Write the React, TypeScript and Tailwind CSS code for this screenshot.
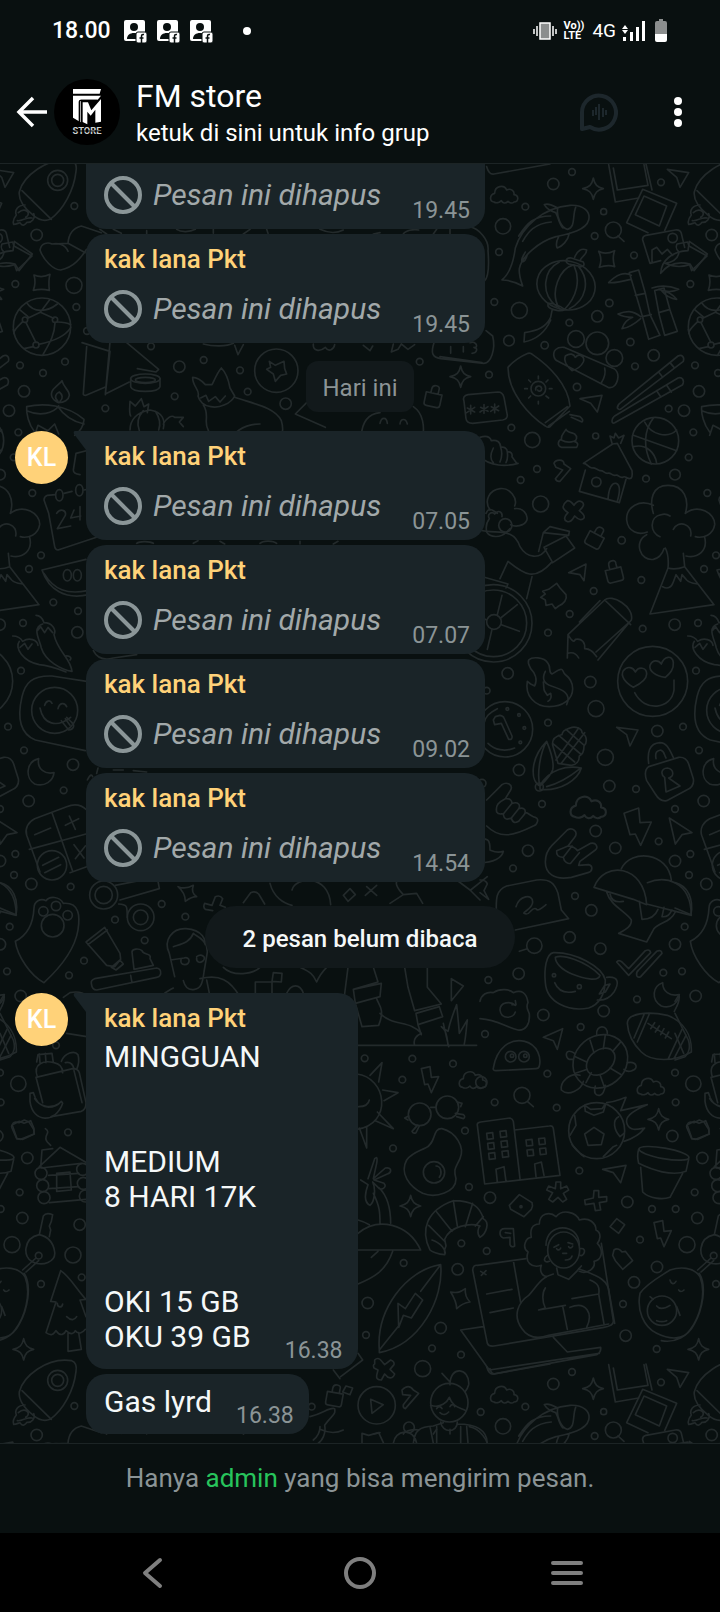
// App.tsx
import React from 'react';

type Dot = [number, number, number];

interface Message {
  id: number;
  time: string;
  sender?: string;
  text?: string;
  deleted?: boolean;
  avatar?: boolean;
  clipped?: boolean;
}

const SENDER = 'kak lana Pkt';

const yesterday: Message[] = [
  { id: 1, time: '19.45', deleted: true, clipped: true },
  { id: 2, time: '19.45', deleted: true, sender: SENDER },
];

const today: Message[] = [
  { id: 3, time: '07.05', deleted: true, sender: SENDER, avatar: true },
  { id: 4, time: '07.07', deleted: true, sender: SENDER },
  { id: 5, time: '09.02', deleted: true, sender: SENDER },
  { id: 6, time: '14.54', deleted: true, sender: SENDER },
];

const unread: Message[] = [
  {
    id: 7,
    time: '16.38',
    sender: SENDER,
    avatar: true,
    text: 'MINGGUAN\n\n\nMEDIUM\n8 HARI 17K\n\n\nOKI 15 GB\nOKU 39 GB',
  },
  { id: 8, time: '16.38', text: 'Gas lyrd' },
];

// Circles scattered between the wallpaper doodles, one list per region
const dotsTopLeft: Dot[] = [
  [223, 138, 10], [110, 225, 17], [46, 372, 10], [222, 376, 24], [229, 441, 10], [60, 616, 10],
  [129, 639, 10], [195, 605, 10], [453, 559, 10], [538, 620, 17], [611, 600, 10], [720, 631, 10],
  [743, 695, 10], [524, 709, 10], [72, 694, 17], [27, 752, 17], [316, 745, 10], [857, 731, 17],
  [1259, 605, 10], [261, 513, 10],
];
const dotsTopRight: Dot[] = [
  [276, 36, 10], [220, 72, 17], [543, 67, 10], [136, 140, 10], [371, 155, 9], [69, 199, 23],
  [344, 228, 10], [57, 276, 10], [462, 286, 10], [43, 426, 10], [388, 429, 11], [118, 451, 24],
  [352, 469, 17], [268, 488, 10], [87, 542, 16], [194, 556, 11], [451, 546, 11], [521, 586, 17],
  [465, 619, 10], [291, 681, 11], [27, 644, 10], [566, 746, 10], [347, 828, 9], [94, 803, 10],
  [157, 840, 23], [171, 927, 10], [122, 960, 10], [498, 956, 10], [585, 944, 16], [626, 892, 10],
  [425, 1141, 11], [484, 1260, 10], [341, 1293, 10], [269, 1362, 10], [204, 1418, 10],
  [488, 1406, 10], [584, 1394, 17],
];
const dotsMidLeft: Dot[] = [
  [55, 97, 10], [97, 279, 10], [123, 466, 10], [87, 507, 10], [160, 607, 10], [234, 633, 10],
  [69, 669, 10], [232, 697, 17], [63, 812, 10], [24, 980, 10], [72, 1051, 10], [219, 1094, 17],
  [86, 1203, 17], [191, 1171, 10], [46, 1362, 10], [42, 1425, 10], [94, 1452, 17], [212, 1460, 10],
];
const dotsMidRight: Dot[] = [
  [83, 100, 17], [331, 126, 17], [348, 206, 24], [204, 248, 10], [117, 390, 17], [376, 352, 24],
  [532, 273, 17], [388, 438, 17], [186, 492, 10], [468, 447, 10], [347, 573, 17], [144, 632, 17],
  [536, 604, 10], [585, 507, 10], [406, 624, 17], [99, 685, 10], [585, 663, 17], [285, 768, 10],
  [334, 811, 17], [269, 892, 17], [361, 926, 17], [585, 913, 17], [550, 998, 10], [116, 1001, 17],
  [25, 1020, 10], [471, 1078, 10], [371, 1113, 17], [190, 1125, 17], [15, 1182, 10],
  [302, 1161, 10], [202, 1301, 10], [585, 1298, 10], [587, 1387, 10], [44, 1387, 10],
  [230, 1403, 10], [577, 1488, 17], [20, 152, 10], [6, 430, 12], [4, 1327, 17],
];
const dotsLowLeft: Dot[] = [
  [29, 140, 10], [345, 119, 10], [434, 181, 10], [252, 242, 10], [207, 286, 10], [21, 274, 10],
  [168, 496, 10], [55, 611, 23], [204, 757, 10], [82, 834, 17], [59, 937, 10], [67, 1014, 17],
  [36, 1094, 24], [239, 1034, 17], [219, 1125, 24], [123, 1212, 10], [245, 1192, 10],
  [485, 72, 10], [556, 110, 10], [1094, 535, 10], [1237, 536, 10], [1359, 551, 10],
  [62, 348, 17],
];
const dotsLowRight: Dot[] = [
  [187, 59, 10], [375, 212, 10], [159, 265, 10], [387, 381, 10], [450, 413, 17], [718, 332, 10],
  [862, 426, 17], [936, 447, 10], [1007, 447, 10], [440, 573, 10], [364, 550, 10], [191, 609, 10],
  [353, 628, 17], [83, 729, 17], [302, 804, 17], [900, 539, 10], [951, 621, 17], [882, 667, 17],
  [849, 732, 10], [857, 827, 17], [950, 867, 10], [78, 825, 10], [276, 865, 10], [363, 884, 10],
  [248, 926, 24], [422, 1056, 10], [-85, 1040, 10],
];

const Dots: React.FC<{ dots: Dot[] }> = ({ dots }) => (
  <>
    {dots.map(([cx, cy, r]) => (
      <circle key={`${cx}-${cy}`} cx={cx} cy={cy} r={r} />
    ))}
  </>
);

const Cloud: React.FC<{ at: string }> = ({ at }) => (
  <path transform={at} d="M-30 22c-14-2-14-22 2-26 0-22 28-28 36-10 12-6 24 2 22 14 16 2 14 22 0 22-6 6-14 2-18-2-8 8-16 6-20-2-6 6-16 8-22 4z" />
);

const Sparkle: React.FC<{ at: string }> = ({ at }) => (
  <path transform={at} d="M0-32c4 20 12 28 30 32-18 4-26 12-30 32-4-20-12-28-32-32 20-4 28-12 32-32z" />
);

const Lock: React.FC<{ at: string }> = ({ at }) => (
  <path transform={at} d="M-24-12h48v32q0 8-8 8h-32q-8 0-8-8zM-10-12v-12q0-12 12-12t10 12v12" />
);

const Bolt: React.FC<{ at: string }> = ({ at }) => (
  <path transform={at} d="M-24-34 2-40 6-8 28-10 6 38-4 12-14 14z" />
);

const WallpaperArt = () => (
  <g id="wallpaper-art">
    <g transform="translate(0 -12)">
      <Dots dots={dotsTopLeft} />
      <path d="M58 95C70 50 140-10 215 2c14 5 15 20 13 32C222 90 190 150 150 178c-20 8-38-2-50-12-20-16-46-42-42-71zM66 92l88 86M75 135c-22 0-32 16-26 30-8 10-12 18-8 28 12 0 14-6 20-4 6 12 16 4 20-2 14 2 26-12 20-26M55 158c20-18 42 2 22 14M52 182c16 2 26-12 44-8" />
      <circle cx="173" cy="61" r="30" />
      <circle cx="173" cy="61" r="18" />
      <path d="M-30 310c28-4 40-18 42-34-10-8-10-14-6-24l32-6 4 12 54 30-46 44-6-18c-20 6-40 10-74-4M120 270c4-22 24-24 36-18l48-2c2-30 16-46 40-52l60 20M120 270c10 30 40 60 62 60 40-8 60-36 78-62M156 252c16-4 40 0 48 22M204 250l52 28" />
      <path d="M102 345c14 6 32 6 48-2-4 14-4 30-2 48-16-4-32-4-48 0 6-16 6-32 2-46z" />
      <circle cx="126" cy="500" r="86" />
      <circle cx="75" cy="479" r="8" />
      <circle cx="165" cy="479" r="8" />
      <circle cx="108" cy="555" r="9" />
      <path d="M80 428c20 30 60 30 92 4M83 475l38-18 28-38M121 457l40 18M68 485c-20 20-28 28-26 36M78 488l30 60M116 553c50-10 80-24 96-50M172 486c20 0 30 2 40 8M165 488c-2 40-16 60-36 96M42 520l-2-12M84 470l-26-22M100 560l-28 6" />
      <path d="M246 548l84 26-14 130M260 560l-10 140q-2 6 8 6l60-26M330 546l-14 156 72-36M380 548l96 80-8 8-56-10" />
      <path d="M392 656v24q4 14 44 14t44-14v-24" />
      <ellipse cx="436" cy="656" rx="44" ry="14" />
      <ellipse cx="436" cy="660" rx="30" ry="8" />
      <path d="M176 728c-20-8-28-24-16-40 10-12 22-20 26-26 4 20 22 28 22 44-2 14-16 22-32 22zM174 724c-14-12-6-24 4-28 10 8 12 20 2 28M80 740c50-12 120-6 172 38M80 740c-2 20 6 54 24 76M80 752c40 18 80 8 96-14M174 740c20 30 44 44 78 52M252 780c-2 20-14 36-28 46M104 826l10-30 30 16 20-20 12 30" />
      <path d="M392 768c-6-12-2-30-2-44l16 14 18-22 8 24 14-8-4 26M390 810c0-30 20-54 60-60 38 6 46 30 40 56M430 752c-16 18-20 40-12 60M466 754c12 18 16 40 10 56M490 792c10-20 26-28 34-20l26 0-12 14 12 14" />
      <circle cx="829" cy="632" r="65" />
      <path d="M808 604l18 12 26-12 2 22 6 16-18 4-16 18-6-22-20-14 12-6z" />
      <path d="M594 708c8-16-18-30-16-56 14 0 24 6 38 22h20c8-16 16-36 28-50 14 14 22 38 26 60l14 24c-10 22-46 38-72 32-20-2-34-16-38-32zM602 714l16-8 8 18 20-14 14 16 16-18M610 735c20 30 0 50 14 74l20 50M704 712c60 20 120 30 140 70 6 20 6 40-4 60M690 852c0-30 40-60 90-60M920 728l-34 34 90 40M1240 740c30 20 34 60 28 94M1084 828c2-40 20-66 56-70M1140 790c4-20 20-20 22 0M1200 792c2-18 18-18 22 0" />
      <Lock at="translate(1300 712) rotate(12)" />
      <Sparkle at="translate(1382 650)" />
      <path d="M1302 548c-10 30-6 44 20 48l130 14c20-2 36-40 26-82l-20-16M1320 590l126 18M1352 560v20M1390 560v16M1410 548c14-6 28 10 14 16M1416 580c14 0 20-16 6-18" />
      <path d="M1408 200c30 6 60 40 56 72M1464 272c4 50 0 80-10 90M940 552c-2 22 20 24 36 10 10 16 26 6 28-8M1090 556l20 16 8-14M1180 552l-6 24 20-8 10-16 20 16 20-14M610 552c30 8 70 8 90-2M704 556l10 28 16-30" />
      <path d="M300 208l20 14M340 208l24 12M440 212v10M530 208c14 10 40 8 56 0M640 208v12M730 222l20-14M800 208l4 12M960 208c30 14 50 12 70 2M1120 222l20-4M1210 222c6-10 30-16 46-12M1300 222l10-14M1350 208v14" />
      <path d="M1300 838c-4 6 0 18 14 10 4 18 20 14 22 0 16 4 26-8 14-16M1392 724c-4-10 0-18 12-20l90-8q14 0 18 16l10 54q0 12-14 14l-90 10q-18 0-20-14zM1412 736v26M1402 744l22 12M1424 742l-24 16M1452 734v26M1442 742l22 12M1464 740l-24 16M1484 732v26M1474 740l22 12M1496 738l-24 16" />
    </g>

    <g transform="translate(1440 -12)">
      <Dots dots={dotsTopRight} />
      <path d="M20 20c4 14 10 24 22 22L210 12" />
      <Cloud at="translate(72 104)" />
      <Sparkle at="translate(340 86)" />
      <path d="M66 360c24-20 34-50 40-96C126 200 190 142 270 136c42-2 62 20 56 44-8 30-54 40-98 50-50 14-104 60-110 96-2 20 4 34 10 52-18-10-36-18-62-18zM193 134c14-6 28 4 40 10-4 26 10 60 30 64 24-6 14-42 24-66M193 134c8 14 20 20 34 24 10 18 10 34 22 46M212 168c-50 0-70 20-96 60M214 186c-50 4-70 30-86 58M236 230c-6 12-10 24-4 34 14-4 32-22 36-44M136 276c-6 12-14 20-10 30 8 0 14-14 16-22" />
      <path d="M386 14l20 112 70-12M400 24l12 66 92-14-12-62M498 12l18 78" />
      <path d="M488 88l102 42-36 82M488 88l-48 100 64 30M492 108l68 30-22 60-72-34z" />
      <circle cx="400" cy="210" r="24" />
      <path d="M414 228l18 16" />
      <path d="M488 240q-2-10 10-14l88-16q14-2 18 10l10 42M488 240l22 70 32-8M516 306v-36l14-8 16 20 16-14 16 18" />
      <circle cx="578" cy="234" r="14" />
      <path d="M542 340c2-40 36-66 82-68l4-28 54 38-40 50-12-20c-40-10-70 4-88 28z" />
      <path d="M562 28l64 10-26 44-10-30z" />
      <ellipse cx="258" cy="376" rx="88" ry="73" transform="rotate(12 258 376)" />
      <path d="M230 440c-50-40-40-110 8-134M238 446c-30-50 0-120 44-132M252 450c40-40 50-90 30-134M268 446c50-24 64-84 28-126M258 302q4-10 16-8l36 12q6 12-6 14l-38-8q-8-4-8-10zM284 292c8-22 22-28 36-22 0 16-16 18-20 32M204 430c14-2 40 10 50 18-10 10-44 0-50-10zM216 452l-4 20c-14 30-40 40-78 46l-2 28c40-8 66-34 80-66" />
      <path d="M356 274c14 8 32 6 48-2-6 16-6 30 0 48-16-6-30-4-46 2 6-14 6-32-2-48z" />
      <path d="M448 338l28-8 20 70 14 64 30 62-34 12-18-66-20-68zM466 406l30-6M486 470l28-6M454 346c-20-12-46-2-68 22 24 2 44-4 66-10M482 470c-24-20-44-18-68-8 14 8 30 10 44 10-16 6-26 16-32 34 20-2 40-16 56-30M524 392l28-8 18 66 22 64-38 12-16-60zM536 458l34-10M516 384c24-8 50-8 80 4-20 10-40 8-60 0 20 4 40 10 54 30-18-2-34-12-44-24" />
      <circle cx="288" cy="537" r="25" />
      <circle cx="352" cy="550" r="34" />
      <circle cx="403" cy="594" r="25" />
      <path d="M222 590c-4-18 8-30 30-28l150 64q12 8 12 24c-2 24-14 36-30 32L234 604q-10-4-12-14zM374 624c4 16-2 32-10 44M256 588c14-10 26-6 30 4 12-14 30-2 24 14-8 16-20 22-34 26-14-12-26-30-20-44z" />
      <path d="M84 622c16-18 36-32 60-42q8-2 14 4c50 34 106 90 112 154l-60 62q-8 4-14-2C150 768 84 700 84 622zM196 788l66-48M206 798l62-44M270 764l30 6q12 10 6 16l-32-14" />
      <circle cx="175" cy="686" r="22" />
      <path d="M167 690c-2-14 16-16 18-4 0 8-10 10-12 4M175 648v8M175 724v8M134 686h8M208 686h8M146 660l6 6M198 708l8 6M204 660l-6 6M146 714l6-6" />
      <path d="M412 744c0-8 4-12 10-16L594 588c12-6 20 4 16 16L424 746q-6 6-12-2zM396 782c0-8 4-10 8-14l190-114c12-4 20 6 14 20L404 788q-8 4-8-6zM536 636l12 16M570 608l12 14M530 692l12 18M560 676l14 20" />
      <path d="M300 716l66-10-14 50-20-26z" />
      <path d="M258 808c4 10 20 10 26 14 10 8 6 20-2 22 12 2 14 10 8 18h-46c-14-6-10-20 0-24-2-14 8-18 14-30zM244 840c14 8 26 8 38 4" />
      <circle cx="526" cy="842" r="70" />
      <path d="M494 786c20 40 70 50 96 24M460 826l130 46M520 774c-30 40-30 90-6 138M460 860c40-10 66 20 70 50" />
      <path d="M310 910l88-58 14-2 44 82c2 16 0 24-8 24-12-2-12-10-20-4-12 2-12-10-22-6-12 2-12-10-24-6-10 0-12-10-22-8-12-4-14-10-24-8-12-2-14-14-26-14zM396 850l-6-22 12 6 4-14 10 14 16-8-10 24M316 930l-18 64 120 34 20-70M384 1018c2-34 12-50 24-48 14 4 12 26 4 54" />
      <circle cx="349" cy="966" r="14" />
      <path d="M222 910c4-12 30-14 30 2l20 14-32 38q-10 2-14-8l22-26-20-8z" />
      <circle cx="182" cy="1032" r="24" />
      <path d="M262 1022q10 0 20 14 12-18 24-10t-8 26q18 14 14 22-10 12-28-6-12 22-24 16-14-8 4-26-18-12-14-20 2-8 12-16z" />
      <Lock at="translate(346 1134) rotate(28)" />
      <Lock at="translate(402 1238) rotate(-14)" />
      <path d="M520 1060c-12-40-4-84 44-84 50 0 64 44 52 84 40-30 90 0 88 34-4 30-34 42-58 36M520 1036c-40-20-82 4-80 44 4 36 36 46 62 36M500 1124c-40 20-20 80 20 74 18-4 26-14 32-32M540 1130c-30-10-34-60 4-66 12-4 20 0 26 4M580 1108c14-30 60-16 52 20M674 1132c10 40-20 64-56 56M556 1164c10 20 10 40 8 60l-54 138 192-28-88-114-4-40M564 1224c14 4 34 2 50-4M548 1280c14 8 26 4 32-14l8-22 14 20 4-20 14 16c10 10 20 10 34 12" />
      <path d="M0 832c20-6 30-2 34 10 16-4 28 4 28 20 10-2 20 2 20 14 10-2 16 4 14 14l14 20M40 864c-10 20-10 34 0 44M62 862c6 18 4 30-2 44M82 878c2 14 0 22-4 30M0 890c30 30 80 30 114 20" />
      <path d="M30 1050c-20-30 0-60 30-64 30-4 54 30 44 52M104 1046c24-4 42 18 36 36-8 16-34 20-48 12M18 1060c10-24 26-4 34 0M20 1116c-4-20 0-30 8-40-8-14 8-24 16-14 10-14 24-6 22 8M20 1116c10 16 40 20 60 0l10-10" />
      <circle cx="76" cy="1096" r="20" />
      <path d="M0 1110c50 14 100-10 120 50 20 34 60 40 80 6M192 1162l66-34 26 36-66 44zM176 1174l14-56 20-18 58 14-2 12-76-8M60 1256l24-52c50 40 80 60 130 4M156 1250l-16 66" />
      <path d="M266 1238l52-26-6 50-12-18zM206 1288l24-18 10 14 18 20c4 14-6 28-22 34l-10 8-10-14-18 4-2-16-14-8 14-10-8-8z" />
      <circle cx="40" cy="1390" r="100" />
      <circle cx="40" cy="1390" r="116" />
      <circle cx="42" cy="1386" r="22" />
      <path d="M52 1364l14-58M62 1374l50-40M64 1394l54 20M36 1408l-14 60M20 1380l-20-10M0 1248l84 24-6 12" />
      <path d="M262 1494l2-70 110-104c20-20 90 20 80 60l-100 120M374 1320l78 74M298 1386l62-64M264 1424c12 20 18 24 22 14 20-4 30 10 28 28 20 0 28 14 36 24M348 1476l96-86M262 1480c20-6 30 6 34 14" />
    </g>

    <g transform="translate(0 708)">
      <Dots dots={dotsMidLeft} />
      <path d="M220 210l8-50 40-10M220 210q0 12 20 14M132 300q0-10 10-14l24-2M132 300l14 40 18 100q2 10 10 10l120-40M192 280l24-6M252 270l20-4M170 340c10-16 30-10 26 6l-24 40 40-8M222 330l-10 24 30-6M240 320v40" />
      <ellipse cx="178" cy="286" rx="11" ry="17" />
      <ellipse cx="238" cy="271" rx="11" ry="17" />
      <path d="M258 478l-132 32c20 60 70 90 140 74M132 520c30 50 70 64 130 52" />
      <ellipse cx="202" cy="526" rx="12" ry="17" />
      <ellipse cx="232" cy="526" rx="12" ry="17" />
      <path d="M108 646c14 0 20 10 24 22 24 0 38 20 30 36 10 50 50 70 54 110-30-4-80-30-92-70-4-24-30-60 4-72M38 708c14 0 24 6 30 16 20-14 44-4 46 12M58 724c-14 20 10 60 60 70 30 2 50 10 80 22M114 690l8-10 12 18 10-16 14 16M60 742l14-12 10 18 12-16M196 768c16-2 20 8 14 12" />
      <path d="M260 844l-104-16c-60-2-80 20-90 62-14 60-10 110 40 130l150 32" />
      <circle cx="164" cy="931" r="69" />
      <path d="M134 916c4-14 16-18 22-6M174 926c4-18 20-20 26-6M120 924c10 50 50 60 92 28M184 962l22 28c16-2 20-14 8-24l-14-14M196 956l14 20" />
      <path d="M116 1076c-40 10-40 60-12 76 30 10 56-10 58-34-26 6-52-10-46-42z" />
      <path d="M260 1230c-20-20-40-18-60-10l-96 36c-20 10-30 30-24 50l40 110M260 1400l-50 18M156 1238l62 176M88 1348l170-46M104 1304l48-20M196 1276l40-20M208 1248l18 40M222 1334l30 40M256 1338l-30 38" />
      <circle cx="156" cy="1396" r="44" />
      <path d="M128 1396l48-24M134 1418l48-24" />
      <path d="M280 752c10 20 30 30 60 22l70-10M262 1140c10-20 14-16 16-10M290 1120l4-16M340 1110h30M400 1112l40 4M410 430c10-8 40-6 50 0M580 430l14-8M660 424l14 8M780 430c10-10 40-8 50 0M900 424v8M1000 432l14-8" />
    </g>

    <g transform="translate(1440 1428)">
      <Dots dots={dotsMidRight} />
      <path d="M146 60c10-10 46-10 58 10 10 14 0 26 12 32 10-4 14-12 26-14 8-2 6 8 12 14 16 12 24 28 24 44 0 32-30 54-70 54-44 0-74-34-66-76l10 8 12 6c10-20 0-40-12-52-4-10-10-16-6-26zM196 94c-10 20-6 34 12 42 30 10 70 20 52 58M190 126c2 14 0 20 4 28l8 12 10-6c4 14 0 20-8 24" />
      <circle cx="518" cy="124" r="105" />
      <path d="M460 142c-24-14-40-34-30-50 12-16 30-10 36 4 10-18 34-14 34 6 0 18-20 30-40 40zM556 112c-30-4-50-20-46-36 8-18 26-16 34-4 8-24 34-28 36-4 2 20-10 32-24 44zM464 158c30 60 110 50 118-8V120" />
      <circle cx="75" cy="268" r="83" />
      <path d="M40 240l6-10 14-4q10 2 12 8l24 54q2 12-10 10L64 250l-20 4zM24 310c20 20 50 26 80 14M12 250c4-20 14-30 40-44" />
      <circle cx="82" cy="207" r="4" />
      <circle cx="117" cy="225" r="4" />
      <circle cx="133" cy="264" r="4" />
      <circle cx="121" cy="307" r="4" />
      <path d="M410 262l64 8-24 48-10-34z" />
      <path d="M200 304c-50 50-50 120-20 134M200 304c10 24 24 60 18 86-10 24-30 40-38 48-10-34 0-100 20-134zM180 436c30-50 80-60 124-52-10 34-60 70-124 64zM200 440c40-10 70-30 100-54" />
      <circle cx="178" cy="441" r="12" />
      <path d="M218 316c-4-26 20-30 28-32 2-16 16-16 24-20 14-6 36 0 36 14 16 10 16 30 6 40 0 16-4 26-14 30 0 14-8 26-24 28l-40-6-16-54M218 310l66 56M236 286l66 56M258 268l52 46M228 360l68-96M244 370l70-92" />
      <path d="M506 370c-4-30 0-60 34-62 20 0 28 20 40 44M528 356c-4-20 4-24 14-26 12 4 10 14 16 24M506 380l90-28q22-2 30 20l14 44q4 24-20 34l-60 32q-20 4-34-20l-26-40q-10-30 6-42zM566 414c16-4 18-26-4-30-20 2-20 20-8 28l4 44 42-18z" />
      <path d="M20 480l46-46c14-10 34 0 26 16l-16 26M76 476c-20 10-30 20-26 40 6 10 14 4 20 6 2 20 14 16 24 12 4 18 14 14 22 10 6-10 16-16 20-26 10 0 20 14 30 14 14 4 4 24-6 26-60 30-100 40-140 0M76 476c16-2 20 8 20 14 20-6 26 6 20 16 12-4 24 0 18 16M96 490l-26 32M116 506l-22 28" />
      <Cloud at="translate(324 502) scale(1.3)" />
      <path d="M196 666c0-20 4-34 20-50l46-46c16-10 34 6 22 22l-20 26c10 0 24 6 28 14l40-22c16-4 24 12 14 20l-46 34-4 12 30-2c14 4 12 20-2 24l-50 14c-54 10-78-14-78-46zM264 618l-34 14c-2 14 6 20 20 20 2 14 14 20 22 18l26-32M250 652l26-34" />
      <path d="M432 520l44-16 4 44 34-2-32 70-16-34-16 2zM568 534l68 44-30 6-20 28z" />
      <path d="M0 596c26 0 30 4 30 34 10 4 20 10 40 4-4 20-30 34-70 34" />
      <path d="M424 686c30-60 140-50 150 34M342 742c30-80 150-70 158 52l-40-16zM502 728c50-20 130-10 132 98l-134-34M380 756c10 40 60 60 74 84 2 20-20 30-38 40l84 26 22-40c20-20 50-20 64-50M390 762c4 20 20 26 40 22M478 784l8 54c24 0 40-10 48-30M552 802l-6 28c20 2 24-10 30-20" />
      <path d="M50 830c-4-60 0-80 30-92l90-18c40-4 54 10 64 40l10 50 22 26-160 34M108 800c10-34 50-40 50-14 0 20-30 30-26 34 20 10 20-20 36-14 4 10 20-4 30-12" />
      <circle cx="163" cy="917" r="23" />
      <path d="M118 934l24-8M0 720c10 0 20 4 22 12l-10 20 14 26-26-20" />
      <path d="M220 938c-22 4-28 50-24 90 4 60 70 88 130 76 30-10 50-40 50-84-10-40-90-84-156-82zM226 952c20-10 90 10 134 54-4 20-50 10-84-4-34-14-50-34-50-50zM380 1012c40-4 36 20 22 44-14 20-30 26-50 24M374 1036l16-4-14 24-18 6zM224 1028c10 24 30 34 62 26" />
      <circle cx="222" cy="1006" r="5" />
      <circle cx="298" cy="1040" r="6" />
      <path d="M410 966q6-8 16 0l20 20 50-54q14-6 16 6l-66 68zM470 1006q-2-10 6-16l54-56q14-6 16 6l-64 70q-10 4-12-4z" />
      <path d="M548 1028c-30 10-36 50-4 70 30 10 50-10 54-34-30 6-50-10-50-36z" />
      <path d="M0 1084c4-20 20-30 40-26 20-14 50-10 60 0 24-10 40 0 44 30-8 14 0 20 4 34 2 30-10 50-34 48-40-10-60-30-114-34M106 1096c-14-14-46-10-46 14 4 30 40 26 46 6M96 1094l12 0-2-12" />
      <path d="M190 1192l58-26-16 62-12-26zM40 1284c10-60 50-90 94-80 40 10 50 50 44 74q-2 8-10 8l-120 6q-10 0-8-8z" />
      <circle cx="92" cy="1250" r="16" />
      <circle cx="132" cy="1250" r="16" />
      <circle cx="96" cy="1247" r="5" />
      <circle cx="136" cy="1247" r="5" />
      <path d="M442 1150c0-30 60-38 120-24 50 20 74 60 72 110-50 30-120 30-150 0-20-20-40-50-42-86zM492 1124l-30 70M508 1122l-36 84M606 1168l-42 90M618 1186l-36 70M504 1150l70 46M512 1166l12-18M526 1176l12-18M542 1184l10-18M556 1194l10-18" />
      <ellipse cx="361" cy="1264" rx="86" ry="76" transform="rotate(-40 361 1264)" />
      <ellipse cx="362" cy="1265" rx="48" ry="34" transform="rotate(-40 362 1265)" />
      <path d="M330 1200l12 38M376 1184l-6 42M422 1206l-24 28M286 1250l34 16M286 1300l36-12M318 1328l16-30M372 1338l-12-34M424 1304l-34-20M350 1184c-4-30 34-32 32-2M284 1240c-30-20-30 14-16 18l12 0M442 1268c30-6 34 20 14 24-10 4-20 0-24-4M300 1306c-30-10-60 20-56 44 20 20 60 0 66-26M346 1338c-6 20 0 30 14 28 10-4 14-16 16-30" />
      <Cloud at="translate(512 1340)" />
      <circle cx="126" cy="1366" r="24" />
      <path d="M142 1384l18 16" />
      <Sparkle at="translate(536 1438)" />
    </g>

    <g transform="translate(0 2148)">
      <Dots dots={dotsLowLeft} />
      <path d="M0 8c40 10 56 50 48 96L0 84" />
      <path d="M46 184c40-20 54-60 56-100 0-20 20-30 36-22 10-14 40-14 52 8 50-4 50 40 44 80-10 60-50 110-102 158-40-20-80-80-86-124z" />
      <circle cx="130" cy="94" r="14" />
      <circle cx="168" cy="78" r="14" />
      <circle cx="203" cy="106" r="14" />
      <circle cx="158" cy="137" r="34" />
      <circle cx="311" cy="45" r="26" />
      <circle cx="311" cy="45" r="42" />
      <path d="M346 16l120-24M360 60l118-34-6-34M356 72c30 2 24 10 26 40" />
      <circle cx="422" cy="112" r="22" />
      <circle cx="422" cy="112" r="40" />
      <path d="M258 186l56-44 46 78 2 18-18 22-24-4zM264 194l58-44M334 262l26-22 10 12-22 18zM274 310q-2-10 10-14l186-32q14 2 12 18-4 10-12 10l-180 38q-14 0-16-20zM396 216c0-10 20-12 30-4 4 14 30 6 24 24l10 20-58 12zM392 286l4 22" />
      <path d="M524 290l-16-70c-20-40 10-76 50-74 50 4 60 30 64 70l-10 60c-4 34-10 50-28 52-20 4-30-10-34-26M520 200c30-10 50-14 60-40 10 10 30 14 36 34M512 240l40-6c20-6 20 20 2 20-10 0-14-8-10-18M590 230c14-10 30 0 20 12-10 10-22 4-20-8M620 300l10 50M600 296c60-14 90 4 120 54M480 350c14-10 26-20 40-26" />
      <path d="M534 20c14 6 28 6 46-4-6 16-2 26 10 34-16 0-26 8-34 14 0-18-8-32-22-44z" />
      <path d="M614 70l22 6 10-26q14-6 22 6l-8 20 16 6M614 70q-6 12 2 18l22 4M730 68l22-30q14-6 24 4l18 30M1030 46l20-20 16 18-22 20zM810 10c10 40 40 60 66 66M876 30c10-40 110-50 116 44M1100 20l30 26M1130 16l-34 30M1170 70l40-26c-20-20-30-40-10-50M1210 44l40-4 18 30M1370 0l40 30 30 30M1412 30l50-40" />
      <path d="M670 262c30 30 90 20 110 0M900 262c30 14 40 20 50 44 10-24 20-34 30-44M766 340v-34h50v34M816 304l4-26 26 2-2 26zM860 340c14-30 40-30 50 0M1044 262l-14 110M1120 262l14 44-74 22M1060 328l84-18-4 40-74 20zM1066 370l20 70 50-4c20-50 0-60-6-80M1140 400c40 40 90 20 124 60-20 10-24 24-20 36M1214 262l10 60 20 70 80-20-42-50v-60M1248 400l70-20 10 30-74 24zM1254 434l10 30M1330 430l16 70M1344 496c-4-40-10-50-20-56l20 14c4-20 10-40 26-80 4 40 6 60 8 86l24-40c-4 30-4 50-10 76M1070 496h360" />
      <path d="M1354 296l36 22-36 44zM200 460l60 10M0 364l12-20c4 24-10 40-14 50M0 400l40 80q10 30-10 50l-30 10M0 460l26 60" />
      <path d="M190 352l20-14c20-4 40 0 50 10" />
      <path d="M110 546l4-22 42-4 4 28M118 522l2 26M136 520l2 28M112 590c-14-40 20-50 50-42 20 4 26 14 26 30M108 592l110-26q16 0 20 12l20 90q0 20-14 26l-90 16M108 592l20 76M184 544c10-26 40-34 50-20 4 14 2 30-4 44M196 548c20-4 24 10 26 18M222 572l24 96" />
      <path d="M90 640l10-2 6 16c20 40 60 30 78 10l4 6c-20 60-90 60-98-6zM104 656c16 26 50 30 74 14" />
      <path d="M36 744q-4-10 6-12l16-8 14 6 20-8 10 24 0 16-40 16-12-2zM136 746c20 14-10 20 6 40l10 10" />
      <path d="M122 862l4-52 32-4M118 860l62-58 80 46M124 864l120-14M146 886l90-6M146 926l90-6M148 968l110-10M170 880l40-4 4 54-44 4z" />
      <circle cx="123" cy="880" r="18" />
      <circle cx="128" cy="917" r="18" />
      <circle cx="132" cy="953" r="18" />
      <circle cx="248" cy="868" r="18" />
      <circle cx="250" cy="910" r="18" />
      <circle cx="256" cy="948" r="18" />
      <path d="M118 1064l12-56q8-12 28-4l-4 20-6 14 4 12-4 20M118 1064c-50 10-50 70-20 82 30 14 70 0 66-30-4-30-20-46-46-52M108 1134l-40 36M116 1142l-38 34" />
      <circle cx="116" cy="1127" r="10" />
      <path d="M182 1172c30 20 50 60 76 86l-18 2 18 50M182 1172l-30 92 16 2-30 92c20 14 24 0 30-6 14 20 26 10 30 0 14 14 24 10 28 0 10 14 24 4 30-4M204 1360v54l40-6-8-50M172 1270c0 14 14 14 16 2M200 1310c14 14 24 10 30 0" />
    </g>

    <g transform="translate(1020 2688)">
      <Dots dots={dotsLowRight} />
      <path d="M50 42c90 10 110 150 0 166M90 46l36-38-10 58M128 90l46 8-42 24M112 156l48 50-54-24M58 204l22 60v-62M56 140c20 0 30-10 32-20" />
      <Bolt at="translate(268 60)" />
      <Cloud at="translate(398 60)" />
      <circle cx="239" cy="163" r="34" />
      <circle cx="322" cy="142" r="34" />
      <path d="M272 142l16 0M206 168l-12 6 10 6M232 196l-16 18q4 8 12 4l10-20M352 126l14 4-4 10M346 160l24 4q8 6 0 12l-20-6" />
      <path d="M256 264c34-14 20-60 50-58 40 10 70 54 54 90-14 30-20 30-12 60 0 40-60 60-100 44-40-20-70-60-48-100 14-20 36-26 56-36z" />
      <circle cx="282" cy="337" r="32" />
      <path d="M288 318c14 0 20 20 10 34" />
      <path d="M412 196q-2-8 10-10l88-12q8 2 10 10l20 172M412 196l22 176 226-26-20-140q-2-10-12-8l-104 12M472 366l-4-38 24-8 6 44M588 350l-4-38 20-6 8 40M440 220l18-2 2 18-18 2zM480 214l18-2 2 18-18 2zM443 250l18-2 2 18-18 2zM483 244l18-2 2 18-18 2zM446 280l18-2 2 18-18 2zM486 274l18-2 2 18-18 2zM558 240l18-2 2 18-18 2zM596 236l18-2 2 18-18 2zM561 270l18-2 2 18-18 2zM599 266l18-2 2 18-18 2z" />
      <circle cx="770" cy="212" r="84" />
      <path d="M762 202l30 20-8 32-40 2-10-34zM734 136l18 12 34-2 10-14M734 136l2 18 26 12 28-10 6-20M704 166l4 30-18 30M836 170c-20 10-14 40 4 60l12-10M696 254l26 28 10 8M790 290l30-30 10-4M800 128c24-2 34-8 58-16l-16 40 80-18c-50 20-70 40-60 60 10 20 30 14 52 10-10 14-30 30-62 40" />
      <path d="M1042 196q0-8 10-10l10 2 16-8 14 6 14 22 2 14-34 16-18-2z" />
      <path d="M788 328l70-12-16 52-22-30z" />
      <path d="M896 268c-6 20-2 34 0 42 40 20 100 40 142 24l8-36M902 322l6 74c20 20 60 24 82 16l38-72" />
      <ellipse cx="972" cy="280" rx="76" ry="16" transform="rotate(10 972 280)" />
      <path d="M648 366h14l0 20 18-8 6 12-16 10 10 18-12 8-14-14-16 14-12-8 12-20-18-8 6-12 20 8z" />
      <path d="M762 392h14v20l24-2v14l-22 4 4 22-16 2-4-22-26 4-2-14 26-6z" />
      <path d="M508 436l30-32 38 24q4 10-2 20l-22 22-40-22z" />
      <circle cx="543" cy="440" r="3" />
      <path d="M84 356l20-60q10-10 6 14l-10 46 36-32c20-4 20 14 6 18l-40 18 30 10c10 10-4 20-14 16l-20-20c10 20 6 60-8 70-20-10-14-40-6-62l-22-14M100 400c20 40 20 60 20 90M118 384c24 24 34 60 34 106M54 520c60-50 150-30 188 50H54M54 480c14 4 24 8 34 14M158 574c-20 60-60 80-104 98M94 592l20-18" />
      <Sparkle at="translate(212 438)" />
      <path d="M270 570c-30-60-10-120 70-148 60 0 80 20 90 54 20 10 10 44-10 56-10-10-6-30 0-34-30-10-90 0-106 40l4 20c-10 20 0 20-4 26-20 0-40-10-44-14zM340 422l12 76M290 456l46 58M398 430l-22 70M266 496l50 50M430 470l-24 28M276 540c30 10 40 30 40 40" />
      <path d="M480 520q0-14 14-14l26 0 4 52q-10 6-14-4l0-22-20 2q-10-4-10-14zM496 518l16 2" />
      <Bolt at="translate(966 522)" />
      <path d="M830 476l24 18-18 26-26-20zM822 570c10-8 20 0 24 6l10-2 22 28-30 26-22-26-8-16z" />
      <path d="M118 870c-10-120 80-240 184-256 10 100-60 240-184 264zM118 870l56-70M302 614l-60 80M174 730l22 16 30-46 22 20-34 54-24-8-14 36z" />
      <path d="M332 696c20 4 30 0 44-10-2 18 4 30 14 40-18 2-30 10-40 20 0-18-8-34-18-50z" />
      <path d="M398 630q2-16 14-14l146-20M398 630l44 220q4 10 20 8l330-56q30-4 28-20l-36-232M520 602l22 126M440 702l76-14M450 758l70-14M422 634l16 10M438 632l-14 14M430 800l-68 10 86 120 330-50M450 926q4 20 20 14l300-56q14-8 12-22l-100 14-42-44" />
      <path d="M620 650c-20-4-20-24-16-34-30 10-50-10-40-40-20-14-6-44 10-44-4-20 0-40 24-40 0-30 30-40 50-22 20-24 60-14 70 10 30-10 50 10 50 30 20 10 10 34 4 40 20 20 14 50-10 54 6 20-20 40-44 30" />
      <ellipse cx="671" cy="570" rx="48" ry="54" />
      <path d="M618 556c0-70 100-70 100 0M722 566c20-4 10 26-2 20M622 586c-14 10-10 24 6 18M642 562l14-8M684 548l14 4M650 566c4 6 10 4 12-2M686 560c4 6 10 4 12-2M668 580l12 0M676 600c10 0 18-4 20-12M650 624l4 20 32 14 24-24 14-16M640 642c-40 10-50 40-74 64-30 20-50 60-20 100 20 30 50 30 80 20l180-34M716 626c50 20 90 30 92 74l16 90M616 684c-10 14-10 40 0 60l-20 6 80-14M696 716l80-14 16 90M668 738l14 70M690 742c50-20 70 20 50 60M750 660c24 10 30 20 26 44" />
      <path d="M900 700c20-30 60-50 90-70 30-10 70-10 90 20 20 50 0 120-30 160-20 30-60 30-100 10-40-20-60-70-50-120zM1078 640c24 40 8 110-14 150-20 40-60 60-100 52" />
      <circle cx="966" cy="752" r="44" />
      <path d="M990 660c4 14 12 14 18 4M1016 690c4 6 10 6 16 0M950 738c8 10 24 8 40-2M950 782c10 4 20 4 30 0M930 710l10 8M1010 740l10 26" />
      <Sparkle at="translate(1076 868)" />
      <path d="M54 880l14 20-66 50M-20 930l20 26M104 900q10-10 20 2l10 12 18-14q12 4 10 14l-12 14 14 14q-6 16-20 10l-10-10-10 18q-16 0-14-14l4-16-12-6q-4-10 2-12zM18 978l20 6-8 20-22-8z" />
      <circle cx="110" cy="1036" r="56" />
      <path d="M92 1018l38 16-34 26zM186 990q20-20 34 0l16 10-40 46q-8-2-6-12l22-28-24-2z" />
      <ellipse cx="328" cy="1028" rx="56" ry="58" />
      <path d="M272 1036c30 10 50-10 56-24 10 30 30 30 50 40M330 974c0-60 60-50 56 0q-4 14-10 20M306 940l24 26M290 1046c4-8 12-8 16 0M330 1040c4-8 12-8 14 0M300 1058c10 10 20 4 26-2M302 1086c4 34 50 34 50 0M220 1150c4-40 20-50 60-52l30-10M352 1092c60 0 90 20 90 60M270 1100l10 50M290 1100v50M362 1100v50M380 1100l4 50M160 1150c4-40 60-50 70 0M66 1150v-30l20 6 30-8 14 30" />
      <circle cx="207" cy="1102" r="16" />
      <path d="M-90 1070c40-10 60-30 74-24 4 20-10 20-30 50 4 20-4 50-30 60M-60 1100c0 20-8 30-20 40" />
      <Lock at="translate(-16 1010) rotate(10)" />
    </g>
  </g>
);

// The art repeats every 2025 x 3600 units, three units to a pixel
const Wallpaper = () => (
  <svg
    className="absolute inset-0 h-full w-full text-[#232a2b]"
    viewBox="0 0 2160 3840"
    preserveAspectRatio="xMinYMin slice"
    fill="none"
    stroke="currentColor"
    strokeWidth="5"
    strokeLinejoin="round"
    strokeLinecap="round"
    aria-hidden="true"
  >
    <WallpaperArt />
    <use href="#wallpaper-art" x="-2025" />
    <use href="#wallpaper-art" x="2025" />
    <use href="#wallpaper-art" y="3600" />
    <use href="#wallpaper-art" x="2025" y="3600" />
  </svg>
);

const ContactIcon = () => (
  <svg className="h-6 w-6" viewBox="0 0 24 24" aria-hidden="true">
    <rect x="1" y="1" width="21" height="21" rx="2" fill="#fff" />
    <circle cx="11" cy="8" r="4" fill="#091010" />
    <path d="M4 20c0-4 3-6 7-6 2 0 3 0 4 1v5z" fill="#091010" />
    <rect x="13" y="13" width="11" height="11" rx="2" fill="#fff" stroke="#091010" />
    <path d="M21 15.500c-2.500-.5-2.500 1-2.500 2.500v6M16.500 19h4" fill="none" stroke="#091010" strokeWidth="1.500" />
  </svg>
);

const StatusBar = () => (
  <div className="flex h-[60px] items-center pl-[52px] pr-[53px] pt-[2px] text-white">
    <span className="text-[23px] leading-7 font-medium">18.00</span>
    <div className="ml-3 flex gap-[9px]">
      <ContactIcon />
      <ContactIcon />
      <ContactIcon />
    </div>
    <span className="ml-[30px] size-2 rounded-full bg-white" />
    <div className="ml-auto flex items-center">
      <svg className="h-5 w-6" viewBox="0 0 24 20" fill="none" stroke="#fff" strokeWidth="1.500" aria-hidden="true">
        <rect x="7" y="2" width="10" height="16" fill="#8b8e8e" />
        <path d="M4 5v10M1 8v5M20 5v10M23 8v5" />
      </svg>
      <span className="ml-[7px] flex flex-col text-[11px] leading-[10px] font-bold">
        <span>Vo))</span>
        <span>LTE</span>
      </span>
      <span className="ml-2 text-[19px] leading-6">4G</span>
      <svg className="ml-[6px] h-5 w-6" viewBox="0 0 24 20" fill="#fff" aria-hidden="true">
        <path d="M3 4l3 4H0zM3 13L0 9h6zM1 16h3v4H1zM8 11h3v9H8zM14 6h3v14h-3zM20 0h3v20h-3z" />
      </svg>
      <svg className="ml-[9px] h-6 w-3" viewBox="0 0 12 24" aria-hidden="true">
        <path d="M0 4q0-2 2-2h2V0h4v2h2q2 0 2 2v11H0z" fill="#8b8e8e" />
        <path d="M0 15h12v6q0 2-2 2H2q-2 0-2-2z" fill="#fff" />
      </svg>
    </div>
  </div>
);

const GroupAvatar = () => (
  <svg className="size-[66px] shrink-0" viewBox="0 0 198 198" role="img" aria-label="FM store">
    <circle cx="99" cy="99" r="99" fill="#000" />
    <path fill="#fff" d="M57 30h84l-4 14H57zM57 50h84l-10 12H80v68l-23-14zM86 70h16l10 24 29-34v68l-17 3V92l-14 18-10-12v38l-14-7z" />
    <path d="M76 132V68q0-4 4-4h50" fill="none" stroke="#000" strokeWidth="4" />
    <text x="99" y="166" textAnchor="middle" fill="#cfd3d3" className="font-['Roboto'] text-[28px] font-bold">STORE</text>
    <path d="M52 156h94" stroke="#000" strokeWidth="3" />
  </svg>
);

const ChatHeader = () => (
  <header className="flex h-[104px] items-center border-b border-[#1c2425]">
    <button type="button" aria-label="Kembali" className="ml-4">
      <svg className="h-8 w-8" viewBox="0 0 32 32" fill="none" stroke="#fff" strokeWidth="3.500" aria-hidden="true">
        <path d="M31 16H4M17 2L3 16l14 14" />
      </svg>
    </button>
    <span className="ml-[6px]">
      <GroupAvatar />
    </span>
    <div className="ml-4 flex flex-col pt-1">
      <h1 className="text-[32px] leading-[38px] text-white">FM store</h1>
      <p className="text-[24px] leading-9 text-white">ketuk di sini untuk info grup</p>
    </div>
    <button type="button" aria-label="Obrolan suara" className="ml-auto">
      <svg className="h-10 w-10" viewBox="0 0 40 40" fill="none" stroke="#1d272c" strokeWidth="4" aria-hidden="true">
        <path d="M4 37V20A17 17 0 1 1 12 35z" strokeLinejoin="round" />
        <path d="M15 18v6M21 12v16M18 15v8M25 16v9M28 18v5" strokeWidth="2" />
      </svg>
    </button>
    <button type="button" aria-label="Menu lainnya" className="ml-[52px] mr-[34px]">
      <svg className="h-8 w-4" viewBox="0 0 16 32" fill="#fff" aria-hidden="true">
        <circle cx="8" cy="5" r="4" />
        <circle cx="8" cy="16" r="4" />
        <circle cx="8" cy="27" r="4" />
      </svg>
    </button>
  </header>
);

const DeletedIcon = () => (
  <svg className="size-[38px] shrink-0" viewBox="0 0 38 38" fill="none" stroke="#8b9698" strokeWidth="4" aria-hidden="true">
    <circle cx="19" cy="19" r="17" />
    <path d="M7 7l24 24" />
  </svg>
);

const MessageRow: React.FC<{ message: Message }> = ({ message }) => {
  const { sender, avatar, clipped, deleted, text, time } = message;
  return (
    <li className="flex items-start">
      <div className="w-[86px] shrink-0 pl-[15px]">
        {avatar && (
          <span className="flex size-[53px] items-center justify-center rounded-full bg-[#ffd279] text-[25px] font-medium text-white">
            KL
          </span>
        )}
      </div>
      <div
        className={`relative bg-[#1a2428] pb-1 pl-[18px] pr-[15px] ${
          clipped ? 'rounded-b-[20px] pt-[13px]' : sender ? 'rounded-[20px] pt-[7px]' : 'rounded-[20px] pt-[10px]'
        } ${avatar ? 'rounded-tl-none' : ''}`}
      >
        {avatar && (
          <svg className="absolute top-0 -left-[13px] h-5 w-4" viewBox="0 0 16 20" fill="#1a2428" aria-hidden="true">
            <path d="M16 0H2Q0 0 1 3l12 16h3z" />
          </svg>
        )}
        {sender && <p className="text-[26px] leading-9 font-medium text-[#ffd279]">{sender}</p>}
        <div className="flex items-end">
          {deleted ? (
            <p
              className={`mb-[13px] flex h-[35px] items-center gap-[11px] text-[30px] leading-[35px] text-[#a2a9aa] italic ${
                sender ? 'mt-[14px]' : ''
              }`}
            >
              <DeletedIcon />
              Pesan ini dihapus
            </p>
          ) : (
            <p className={`mb-[11px] text-[30px] leading-[35px] whitespace-pre-line text-[#f5f8f8] ${sender ? 'mt-[3px]' : ''}`}>
              {text}
            </p>
          )}
          <time className={`text-[23px] leading-7 text-[#8b9496] ${deleted ? 'ml-[31px]' : 'ml-6'}`}>{time}</time>
        </div>
      </div>
    </li>
  );
};

const MessageList: React.FC<{ messages: Message[] }> = ({ messages }) => (
  <ul className="flex flex-col gap-[5px]">
    {messages.map((message) => (
      <MessageRow key={message.id} message={message} />
    ))}
  </ul>
);

const NavigationBar = () => (
  <nav className="flex h-[79px] items-center justify-center gap-[175px] bg-black text-[#7f7f7f]">
    <button type="button" aria-label="Kembali">
      <svg className="h-8 w-8" viewBox="0 0 32 32" fill="none" stroke="currentColor" strokeWidth="4" strokeLinecap="round" strokeLinejoin="round" aria-hidden="true">
        <path d="M23 3L8 16l15 13" />
      </svg>
    </button>
    <button type="button" aria-label="Beranda">
      <svg className="h-8 w-8" viewBox="0 0 32 32" fill="none" stroke="currentColor" strokeWidth="4" aria-hidden="true">
        <circle cx="16" cy="16" r="14" />
      </svg>
    </button>
    <button type="button" aria-label="Aplikasi terbaru">
      <svg className="h-8 w-8" viewBox="0 0 32 32" fill="none" stroke="currentColor" strokeWidth="4" strokeLinecap="round" aria-hidden="true">
        <path d="M2 6h28M2 16h28M2 26h28" />
      </svg>
    </button>
  </nav>
);

const App: React.FC = () => {
  return (
    <div className="flex min-h-screen flex-col bg-[#091010] font-['Roboto','Noto_Sans',sans-serif]">
      <StatusBar />
      <ChatHeader />
      <main className="relative grow overflow-hidden">
        <Wallpaper />
        <div className="relative pb-[9px]">
          <MessageList messages={yesterday} />
          <p className="mx-auto mt-[18px] mb-[19px] flex h-[51px] w-fit items-center rounded-xl bg-[#12191b] px-4 pt-[3px] text-[24px] text-[#8b9496]">
            Hari ini
          </p>
          <MessageList messages={today} />
          <p className="mx-auto mt-6 mb-[25px] flex h-[62px] w-fit items-center rounded-full bg-[#12191b] px-[38px] pt-[3px] text-[24px] font-medium text-[#f5f8f8]">
            2 pesan belum dibaca
          </p>
          <MessageList messages={unread} />
        </div>
      </main>
      <footer className="h-[90px] border-t border-[#1c2425] pt-[18px] text-center text-[26px] leading-8 text-[#8b9496]">
        Hanya{' '}
        <a href="#admin" className="text-[#27c45c]">
          admin
        </a>{' '}
        yang bisa mengirim pesan.
      </footer>
      <NavigationBar />
    </div>
  );
};

export default App;
